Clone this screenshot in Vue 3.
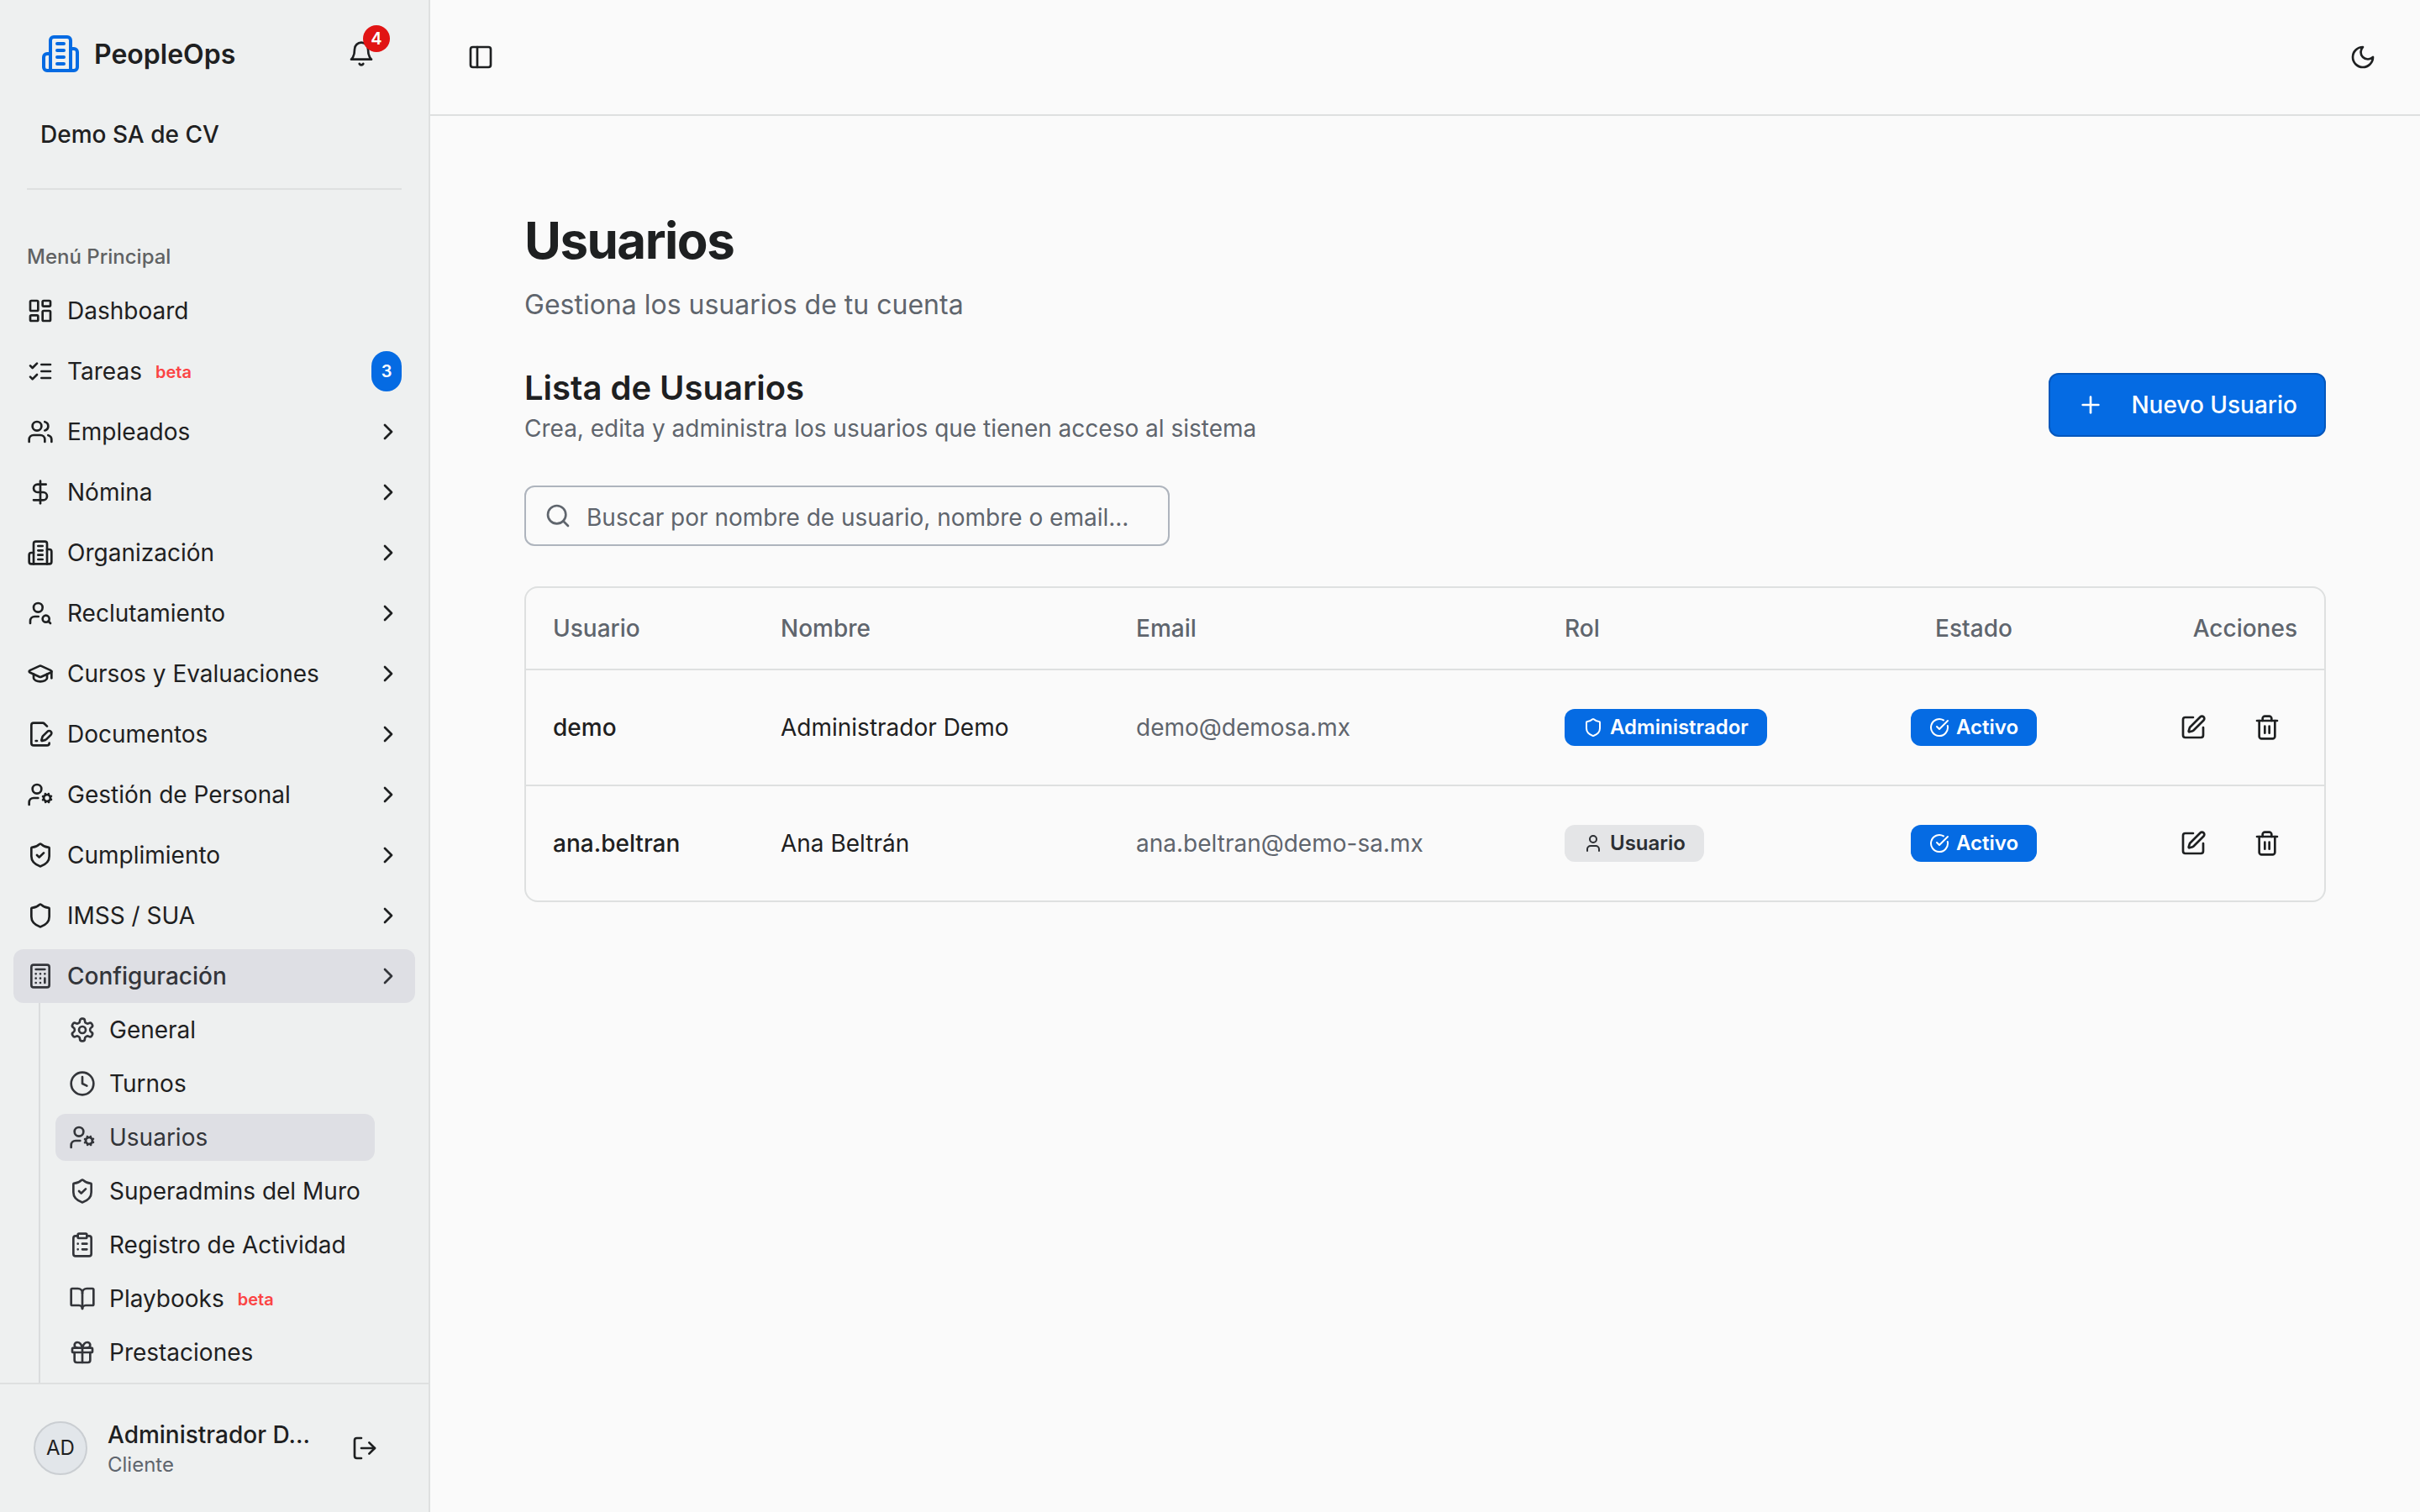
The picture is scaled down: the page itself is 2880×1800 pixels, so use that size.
<template>
  <div class="layout">
    <!-- Sidebar -->
    <aside class="sidebar">
      <div class="sidebar-header">
        <div class="brand">
          <svg class="icon logo" viewBox="0 0 24 24" v-html="icons.building"></svg>
          <span class="brand-name">PeopleOps</span>
          <button class="bell-button">
            <svg class="icon" viewBox="0 0 24 24" v-html="icons.bell"></svg>
            <span class="bell-count">4</span>
          </button>
        </div>
        <div class="company">Demo SA de CV</div>
      </div>
      <hr class="separator" />

      <nav class="nav">
        <div class="nav-label">Menú Principal</div>
        <ul class="menu">
          <li v-for="item in menu" :key="item.label">
            <a class="menu-item" :class="{ active: item.active }">
              <svg class="icon" viewBox="0 0 24 24" v-html="icons[item.icon]"></svg>
              <span>{{ item.label }}</span>
              <span v-if="item.beta" class="beta">beta</span>
              <span v-if="item.count" class="count">{{ item.count }}</span>
              <svg v-if="item.children" class="icon chevron" viewBox="0 0 24 24" v-html="icons.chevron"></svg>
            </a>
          </li>
        </ul>
        <ul class="submenu">
          <li v-for="item in submenu" :key="item.label">
            <a class="submenu-item" :class="{ active: item.active }">
              <svg class="icon" viewBox="0 0 24 24" v-html="icons[item.icon]"></svg>
              <span>{{ item.label }}</span>
              <span v-if="item.beta" class="beta">beta</span>
            </a>
          </li>
        </ul>
      </nav>

      <div class="sidebar-footer">
        <div class="avatar">AD</div>
        <div class="account">
          <div class="account-name">Administrador D…</div>
          <div class="account-role">Cliente</div>
        </div>
        <button class="icon-button">
          <svg class="icon" viewBox="0 0 24 24" v-html="icons.logout"></svg>
        </button>
      </div>
    </aside>

    <!-- Contenido -->
    <main class="main">
      <header class="topbar">
        <svg class="icon" viewBox="0 0 24 24" v-html="icons.panel"></svg>
        <svg class="icon" viewBox="0 0 24 24" v-html="icons.moon"></svg>
      </header>

      <section class="content">
        <h1>Usuarios</h1>
        <p class="subtitle">Gestiona los usuarios de tu cuenta</p>

        <div class="list-header">
          <div>
            <h2>Lista de Usuarios</h2>
            <p class="description">Crea, edita y administra los usuarios que tienen acceso al sistema</p>
          </div>
          <button class="primary-button">
            <svg class="icon" viewBox="0 0 24 24" v-html="icons.plus"></svg>
            Nuevo Usuario
          </button>
        </div>

        <div class="search">
          <svg class="icon" viewBox="0 0 24 24" v-html="icons.search"></svg>
          <input v-model="query" type="text" placeholder="Buscar por nombre de usuario, nombre o email..." />
        </div>

        <div class="table-card">
          <table>
            <colgroup>
              <col class="col-user" />
              <col class="col-name" />
              <col class="col-email" />
              <col class="col-role" />
              <col class="col-status" />
              <col class="col-actions" />
            </colgroup>
            <thead>
              <tr>
                <th>Usuario</th>
                <th>Nombre</th>
                <th>Email</th>
                <th>Rol</th>
                <th class="center">Estado</th>
                <th class="right">Acciones</th>
              </tr>
            </thead>
            <tbody>
              <tr v-for="user in filteredUsers" :key="user.username">
                <td class="username">{{ user.username }}</td>
                <td>{{ user.name }}</td>
                <td class="email">{{ user.email }}</td>
                <td>
                  <span class="badge" :class="{ secondary: !user.admin }">
                    <svg class="icon" viewBox="0 0 24 24" v-html="user.admin ? icons.shield : icons.user"></svg>
                    {{ user.admin ? "Administrador" : "Usuario" }}
                  </span>
                </td>
                <td class="center">
                  <span class="badge">
                    <svg class="icon" viewBox="0 0 24 24" v-html="icons.circleCheck"></svg>
                    Activo
                  </span>
                </td>
                <td>
                  <div class="actions">
                    <button class="icon-button">
                      <svg class="icon" viewBox="0 0 24 24" v-html="icons.edit"></svg>
                    </button>
                    <button class="icon-button">
                      <svg class="icon" viewBox="0 0 24 24" v-html="icons.trash"></svg>
                    </button>
                  </div>
                </td>
              </tr>
            </tbody>
          </table>
        </div>
      </section>
    </main>
  </div>
</template>

<script setup>
import { ref, computed } from "vue";

const shieldPath =
  '<path d="M20 13c0 5-3.5 7.5-7.66 8.95a1 1 0 0 1-.67-.01C7.5 20.5 4 18 4 13V6a1 1 0 0 1 1-1c2 0 4.5-1.2 6.24-2.72a1.17 1.17 0 0 1 1.52 0C14.51 3.81 17 5 19 5a1 1 0 0 1 1 1z"/>';

const icons = {
  building:
    '<path d="M6 22V4a2 2 0 0 1 2-2h8a2 2 0 0 1 2 2v18Z"/><path d="M6 12H4a2 2 0 0 0-2 2v6a2 2 0 0 0 2 2h2"/><path d="M18 9h2a2 2 0 0 1 2 2v9a2 2 0 0 1-2 2h-2"/><path d="M10 6h4M10 10h4M10 14h4M10 18h4"/>',
  bell: '<path d="M6 8a6 6 0 0 1 12 0c0 7 3 9 3 9H3s3-2 3-9"/><path d="M10.3 21a1.94 1.94 0 0 0 3.4 0"/>',
  dashboard:
    '<rect width="7" height="9" x="3" y="3" rx="1"/><rect width="7" height="5" x="14" y="3" rx="1"/><rect width="7" height="9" x="14" y="12" rx="1"/><rect width="7" height="5" x="3" y="16" rx="1"/>',
  tasks: '<path d="m3 17 2 2 4-4"/><path d="m3 7 2 2 4-4"/><path d="M13 6h8M13 12h8M13 18h8"/>',
  users:
    '<path d="M16 21v-2a4 4 0 0 0-4-4H6a4 4 0 0 0-4 4v2"/><circle cx="9" cy="7" r="4"/><path d="M22 21v-2a4 4 0 0 0-3-3.87"/><path d="M16 3.13a4 4 0 0 1 0 7.75"/>',
  dollar: '<path d="M12 2v20"/><path d="M17 5H9.5a3.5 3.5 0 0 0 0 7h5a3.5 3.5 0 0 1 0 7H6"/>',
  userSearch:
    '<circle cx="10" cy="7" r="4"/><path d="M10.3 15H7a4 4 0 0 0-4 4v2"/><circle cx="17" cy="17" r="3"/><path d="m21 21-1.9-1.9"/>',
  graduation:
    '<path d="M21.42 10.922a1 1 0 0 0-.019-1.838L12.83 5.18a2 2 0 0 0-1.66 0L2.6 9.08a1 1 0 0 0 0 1.832l8.57 3.908a2 2 0 0 0 1.66 0z"/><path d="M22 10v6"/><path d="M6 12.5V16a6 3 0 0 0 12 0v-3.5"/>',
  document:
    '<path d="m18 5-2.414-2.414A2 2 0 0 0 14.172 2H6a2 2 0 0 0-2 2v16a2 2 0 0 0 2 2h12a2 2 0 0 0 2-2"/><path d="M21.378 12.626a1 1 0 0 0-3.004-3.004l-4.01 4.012a2 2 0 0 0-.506.854l-.837 2.87a.5.5 0 0 0 .62.62l2.87-.837a2 2 0 0 0 .854-.506z"/><path d="M8 18h1"/>',
  userCog:
    '<circle cx="18" cy="15" r="3"/><circle cx="9" cy="7" r="4"/><path d="M10 15H6a4 4 0 0 0-4 4v2"/><path d="m21.7 16.4-.9-.3"/><path d="m15.2 13.9-.9-.3"/><path d="m16.6 18.7.3-.9"/><path d="m19.1 12.2.3-.9"/><path d="m19.6 18.7-.4-1"/><path d="m16.8 12.3-.4-1"/><path d="m14.3 16.6 1-.4"/><path d="m20.7 13.8 1-.4"/>',
  shield: shieldPath,
  shieldCheck: shieldPath + '<path d="m9 12 2 2 4-4"/>',
  calculator:
    '<rect width="16" height="20" x="4" y="2" rx="2"/><path d="M8 6h8"/><path d="M16 14v4"/><path d="M16 10h.01M12 10h.01M8 10h.01M12 14h.01M8 14h.01M12 18h.01M8 18h.01"/>',
  settings:
    '<path d="M12.22 2h-.44a2 2 0 0 0-2 2v.18a2 2 0 0 1-1 1.73l-.43.25a2 2 0 0 1-2 0l-.15-.08a2 2 0 0 0-2.73.73l-.22.38a2 2 0 0 0 .73 2.73l.15.1a2 2 0 0 1 1 1.72v.51a2 2 0 0 1-1 1.74l-.15.09a2 2 0 0 0-.73 2.73l.22.38a2 2 0 0 0 2.73.73l.15-.08a2 2 0 0 1 2 0l.43.25a2 2 0 0 1 1 1.73V20a2 2 0 0 0 2 2h.44a2 2 0 0 0 2-2v-.18a2 2 0 0 1 1-1.73l.43-.25a2 2 0 0 1 2 0l.15.08a2 2 0 0 0 2.73-.73l.22-.39a2 2 0 0 0-.73-2.73l-.15-.08a2 2 0 0 1-1-1.74v-.5a2 2 0 0 1 1-1.74l.15-.09a2 2 0 0 0 .73-2.73l-.22-.38a2 2 0 0 0-2.73-.73l-.15.08a2 2 0 0 1-2 0l-.43-.25a2 2 0 0 1-1-1.73V4a2 2 0 0 0-2-2z"/><circle cx="12" cy="12" r="3"/>',
  clock: '<circle cx="12" cy="12" r="10"/><path d="M12 6v6l4 2"/>',
  clipboard:
    '<rect width="8" height="4" x="8" y="2" rx="1"/><path d="M16 4h2a2 2 0 0 1 2 2v14a2 2 0 0 1-2 2H6a2 2 0 0 1-2-2V6a2 2 0 0 1 2-2h2"/><path d="M12 11h4M12 16h4M8 11h.01M8 16h.01"/>',
  book: '<path d="M12 7v14"/><path d="M3 18a1 1 0 0 1-1-1V4a1 1 0 0 1 1-1h5a4 4 0 0 1 4 4 4 4 0 0 1 4-4h5a1 1 0 0 1 1 1v13a1 1 0 0 1-1 1h-6a3 3 0 0 0-3 3 3 3 0 0 0-3-3z"/>',
  gift: '<rect width="18" height="4" x="3" y="8" rx="1"/><path d="M12 8v13"/><path d="M19 12v7a2 2 0 0 1-2 2H7a2 2 0 0 1-2-2v-7"/><path d="M7.5 8a2.5 2.5 0 0 1 0-5A4.8 8 0 0 1 12 8a4.8 8 0 0 1 4.5-5 2.5 2.5 0 0 1 0 5"/>',
  chevron: '<path d="m9 18 6-6-6-6"/>',
  logout: '<path d="M9 21H5a2 2 0 0 1-2-2V5a2 2 0 0 1 2-2h4"/><path d="m16 17 5-5-5-5"/><path d="M21 12H9"/>',
  panel: '<rect width="18" height="18" x="3" y="3" rx="2"/><path d="M9 3v18"/>',
  moon: '<path d="M12 3a6 6 0 0 0 9 9 9 9 0 1 1-9-9Z"/>',
  plus: '<path d="M5 12h14"/><path d="M12 5v14"/>',
  search: '<circle cx="11" cy="11" r="8"/><path d="m21 21-4.3-4.3"/>',
  user: '<path d="M19 21v-2a4 4 0 0 0-4-4H9a4 4 0 0 0-4 4v2"/><circle cx="12" cy="7" r="4"/>',
  circleCheck: '<path d="M21.801 10A10 10 0 1 1 17 3.335"/><path d="m9 11 3 3L22 4"/>',
  edit: '<path d="M12 3H5a2 2 0 0 0-2 2v14a2 2 0 0 0 2 2h14a2 2 0 0 0 2-2v-7"/><path d="M18.375 2.625a1 1 0 0 1 3 3l-9.013 9.014a2 2 0 0 1-.853.505l-2.873.84a.5.5 0 0 1-.62-.62l.84-2.873a2 2 0 0 1 .506-.852z"/>',
  trash:
    '<path d="M3 6h18"/><path d="M19 6v14c0 1-1 2-2 2H7c-1 0-2-1-2-2V6"/><path d="M8 6V4c0-1 1-2 2-2h4c1 0 2 1 2 2v2"/><path d="M10 11v6"/><path d="M14 11v6"/>',
};

const menu = [
  { label: "Dashboard", icon: "dashboard" },
  { label: "Tareas", icon: "tasks", beta: true, count: 3 },
  { label: "Empleados", icon: "users", children: true },
  { label: "Nómina", icon: "dollar", children: true },
  { label: "Organización", icon: "building", children: true },
  { label: "Reclutamiento", icon: "userSearch", children: true },
  { label: "Cursos y Evaluaciones", icon: "graduation", children: true },
  { label: "Documentos", icon: "document", children: true },
  { label: "Gestión de Personal", icon: "userCog", children: true },
  { label: "Cumplimiento", icon: "shieldCheck", children: true },
  { label: "IMSS / SUA", icon: "shield", children: true },
  { label: "Configuración", icon: "calculator", children: true, active: true },
];

const submenu = [
  { label: "General", icon: "settings" },
  { label: "Turnos", icon: "clock" },
  { label: "Usuarios", icon: "userCog", active: true },
  { label: "Superadmins del Muro", icon: "shieldCheck" },
  { label: "Registro de Actividad", icon: "clipboard" },
  { label: "Playbooks", icon: "book", beta: true },
  { label: "Prestaciones", icon: "gift" },
];

const users = ref([
  { username: "demo", name: "Administrador Demo", email: "demo@demosa.mx", admin: true },
  { username: "ana.beltran", name: "Ana Beltrán", email: "ana.beltran@demo-sa.mx", admin: false },
]);

const query = ref("");

const filteredUsers = computed(() => {
  const q = query.value.trim().toLowerCase();
  return users.value.filter((u) => `${u.username} ${u.name} ${u.email}`.toLowerCase().includes(q));
});
</script>

<style>
body {
  background-color: #fafafa;
}
</style>

<style scoped>
* {
  box-sizing: border-box;
}

.layout {
  display: flex;
  height: 100vh;
  overflow: hidden;
  font-family: Inter, sans-serif;
  font-size: 28px;
  line-height: 40px;
  color: #1e2021;
  background-color: #fafafa;
}

h1,
h2,
p,
ul {
  margin: 0;
  padding: 0;
}

ul {
  list-style: none;
}

button {
  margin: 0;
  padding: 0;
  border: none;
  background: none;
  font: inherit;
  color: inherit;
  cursor: pointer;
}

.icon {
  display: block;
  flex-shrink: 0;
  width: 32px;
  height: 32px;
  fill: none;
  stroke: currentColor;
  stroke-width: 2;
  stroke-linecap: round;
  stroke-linejoin: round;
}

/* Sidebar */
.sidebar {
  display: flex;
  flex-direction: column;
  flex-shrink: 0;
  width: 512px;
  border-right: 2px solid #dee0e0;
  background-color: #eef0f0;
}

.sidebar-header {
  height: 224px;
  padding: 28px 44px 0 48px;
}

.brand {
  display: flex;
  align-items: center;
  height: 72px;
}

.logo {
  width: 48px;
  height: 48px;
  color: #056be3;
}

.brand-name {
  margin-left: 16px;
  padding-top: 2px;
  font-size: 32px;
  font-weight: 600;
}

.bell-button {
  position: relative;
  display: flex;
  align-items: center;
  justify-content: center;
  width: 72px;
  height: 72px;
  margin-left: auto;
}

.bell-count {
  position: absolute;
  top: 2px;
  right: 2px;
  width: 32px;
  height: 32px;
  border-radius: 50%;
  background-color: #e11414;
  color: #fff;
  font-size: 20px;
  font-weight: 600;
  line-height: 33px;
  text-align: center;
}

.company {
  margin-top: 40px;
  font-weight: 500;
}

.separator {
  flex-shrink: 0;
  width: 446px;
  height: 2px;
  margin: 0 32px;
  border: none;
  background-color: #dee0e0;
}

.nav {
  flex: 1;
  min-height: 0;
  padding: 48px 16px 0;
  overflow: hidden;
}

.nav-label {
  height: 64px;
  padding: 0 16px;
  font-size: 24px;
  font-weight: 500;
  line-height: 64px;
  color: #606263;
}

.menu {
  display: flex;
  flex-direction: column;
  gap: 8px;
}

.menu-item {
  display: flex;
  align-items: center;
  gap: 16px;
  height: 64px;
  padding: 0 16px;
  border-radius: 12px;
}

.menu-item.active {
  background-color: #dedfe4;
  color: #33353a;
  font-weight: 500;
}

.chevron {
  margin-left: auto;
}

.beta {
  padding-top: 2px;
  font-size: 20px;
  font-weight: 600;
  color: #fb4444;
}

.count {
  width: 36px;
  height: 48px;
  margin-left: auto;
  border-radius: 18px;
  background-color: #056be3;
  color: #fff;
  font-size: 20px;
  font-weight: 600;
  line-height: 49px;
  text-align: center;
}

.submenu {
  display: flex;
  flex-direction: column;
  gap: 8px;
  height: 600px;
  margin: 0 48px 0 30px;
  padding: 4px 0 4px 18px;
  border-left: 2px solid #dadcdd;
}

.submenu-item {
  display: flex;
  align-items: center;
  gap: 16px;
  height: 56px;
  padding: 0 16px;
  border-radius: 12px;
}

.submenu-item .icon {
  color: #33353a;
}

.submenu-item.active {
  background-color: #dedfe4;
  color: #33353a;
}

.sidebar-footer {
  display: flex;
  align-items: center;
  flex-shrink: 0;
  gap: 24px;
  height: 154px;
  padding: 0 40px;
  border-top: 2px solid #dee0e0;
}

.avatar {
  width: 64px;
  height: 64px;
  border: 2px solid #caced2;
  border-radius: 50%;
  background-color: #e2e6ea;
  font-size: 24px;
  line-height: 60px;
  text-align: center;
}

.account {
  width: 246px;
}

.account-name {
  font-weight: 500;
  white-space: nowrap;
}

.account-role {
  font-size: 24px;
  line-height: 32px;
  color: #5f656d;
}

.icon-button {
  display: flex;
  align-items: center;
  justify-content: center;
  width: 72px;
  height: 72px;
}

/* Contenido principal */
.main {
  flex: 1;
  min-width: 0;
}

.topbar {
  display: flex;
  align-items: center;
  justify-content: space-between;
  height: 138px;
  padding: 0 52px 0 44px;
  border-bottom: 2px solid #dee0e0;
}

.content {
  padding: 112px;
}

h1 {
  font-size: 60px;
  font-weight: 700;
  line-height: 72px;
  letter-spacing: -0.025em;
}

.subtitle {
  margin-top: 17px;
  font-size: 32px;
  line-height: 48px;
  color: #5f656d;
}

.list-header {
  display: flex;
  align-items: center;
  justify-content: space-between;
  margin-top: 47px;
}

h2 {
  font-size: 40px;
  font-weight: 600;
  line-height: 56px;
}

.description {
  color: #5f656d;
}

.primary-button {
  display: flex;
  align-items: center;
  gap: 32px;
  height: 76px;
  padding: 0 32px;
  border: 2px solid #0457bd;
  border-radius: 12px;
  background-color: #056be3;
  color: #fff;
  font-weight: 500;
}

.search {
  display: flex;
  align-items: center;
  gap: 18px;
  width: 768px;
  height: 72px;
  margin-top: 48px;
  padding: 0 22px;
  border: 2px solid #aeb4bd;
  border-radius: 12px;
  color: #5f656d;
}

.search input {
  flex: 1;
  min-width: 0;
  height: 68px;
  padding: 3px 0 0;
  border: none;
  outline: none;
  background: none;
  font: inherit;
  color: #1e2021;
}

.search input::placeholder {
  color: #5f656d;
  opacity: 1;
}

.table-card {
  margin-top: 48px;
  border: 2px solid #dee0e0;
  border-radius: 16px;
}

table {
  width: 100%;
  table-layout: fixed;
  border-collapse: separate;
  border-spacing: 0;
}

.col-user {
  width: 271px;
}

.col-name {
  width: 423px;
}

.col-email {
  width: 510px;
}

.col-role {
  width: 326px;
}

.col-status {
  width: 386px;
}

.col-actions {
  width: 224px;
}

th,
td {
  padding: 0 32px;
  text-align: left;
}

th {
  height: 98px;
  border-bottom: 2px solid #dee0e0;
  font-weight: 500;
  color: #5f656d;
}

td {
  height: 136px;
}

tbody tr:not(:last-child) td {
  height: 138px;
  border-bottom: 2px solid #dee0e0;
}

.center {
  text-align: center;
}

.right {
  text-align: right;
}

.username {
  font-weight: 500;
}

.email {
  color: #5f656d;
}

.badge {
  display: inline-flex;
  align-items: center;
  gap: 8px;
  height: 44px;
  padding: 0 22px;
  border-radius: 12px;
  background-color: #056be3;
  color: #fff;
  font-size: 24px;
  font-weight: 600;
  line-height: 32px;
  vertical-align: middle;
}

.badge .icon {
  width: 24px;
  height: 24px;
}

.badge.secondary {
  background-color: #e4e5e7;
  color: #2c2f33;
}

.actions {
  display: flex;
  justify-content: flex-end;
  gap: 16px;
}
</style>
